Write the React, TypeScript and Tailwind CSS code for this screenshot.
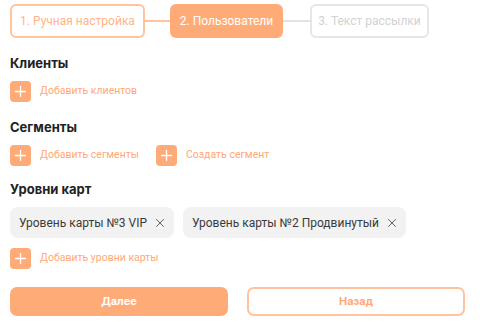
import React from 'react';
import { X, Plus } from 'lucide-react';

const steps = [
  { label: '1. Ручная настройка', state: 'done' },
  { label: '2. Пользователи', state: 'active' },
  { label: '3. Текст рассылки', state: 'todo' },
];

const AddButton = ({ label }: { label: string }) => (
  <button className="flex items-center gap-[9px] leading-none">
    <span className="w-[21px] h-[21px] rounded-[4px] bg-[#ffab78] flex items-center justify-center">
      <Plus size={17} strokeWidth={1.8} className="text-white" />
    </span>
    <span className="text-[10.5px] text-[#ffa877]">{label}</span>
  </button>
);

const Chip = ({ label }: { label: string }) => (
  <div className="h-[31px] flex items-center gap-[6px] pl-[9px] pr-[7px] rounded-[8px] bg-[#f2f2f2]">
    <span className="text-[12px] text-[#3a3a3a]">{label}</span>
    <X size={14} strokeWidth={1.4} className="text-[#444]" />
  </div>
);

export default function App() {
  return (
    <div className="w-[480px] h-[329px] bg-white px-[10px] pt-[4px] font-['Roboto',sans-serif]">
      {/* Stepper */}
      <div className="flex items-center h-[34px]">
        {steps.map((s, i) => (
          <React.Fragment key={i}>
            {i > 0 && (
              <div className={`h-[2px] ${i === 1 ? 'w-[25px] bg-[#ffc39d]' : 'w-[27px] bg-[#e3e3e3]'}`} />
            )}
            <div
              className={`h-[34px] flex items-center justify-center rounded-[6px] text-[12px] ${
                s.state === 'done'
                  ? 'w-[135px] border-2 border-[#ffc39d] text-[#ffb48a]'
                  : s.state === 'active'
                  ? 'w-[113px] bg-[#ffab78] text-white'
                  : 'w-[119px] border-2 border-[#e6e6e6] text-[#d2d2d2]'
              }`}
            >
              {s.label}
            </div>
          </React.Fragment>
        ))}
      </div>

      {/* Клиенты */}
      <h3 className="mt-[17px] text-[13px] font-bold text-[#222] leading-[16px] font-['Inter',sans-serif]">Клиенты</h3>
      <div className="mt-[10px] flex">
        <AddButton label="Добавить клиентов" />
      </div>

      {/* Сегменты */}
      <h3 className="mt-[17px] text-[13px] font-bold text-[#222] leading-[16px] font-['Inter',sans-serif]">Сегменты</h3>
      <div className="mt-[10px] flex items-center gap-[17px]">
        <AddButton label="Добавить сегменты" />
        <AddButton label="Создать сегмент" />
      </div>

      {/* Уровни карт */}
      <h3 className="mt-[15px] text-[13px] font-bold text-[#222] leading-[16px] font-['Inter',sans-serif]">Уровни карт</h3>
      <div className="mt-[10px] flex gap-[9px]">
        <Chip label="Уровень карты №3 VIP" />
        <Chip label="Уровень карты №2 Продвинутый" />
      </div>
      <div className="mt-[10px] flex">
        <AddButton label="Добавить уровни карты" />
      </div>

      {/* Actions */}
      <div className="mt-[18px] flex gap-[19px] font-['Inter',sans-serif]">
        <button className="w-[218px] h-[29px] rounded-[7px] bg-[#ffab78] text-white text-[11px] font-bold">
          Далее
        </button>
        <button className="w-[218px] h-[29px] rounded-[7px] border-2 border-[#ffc39d] text-[#ffa877] text-[11px] font-bold">
          Назад
        </button>
      </div>
    </div>
  );
}
